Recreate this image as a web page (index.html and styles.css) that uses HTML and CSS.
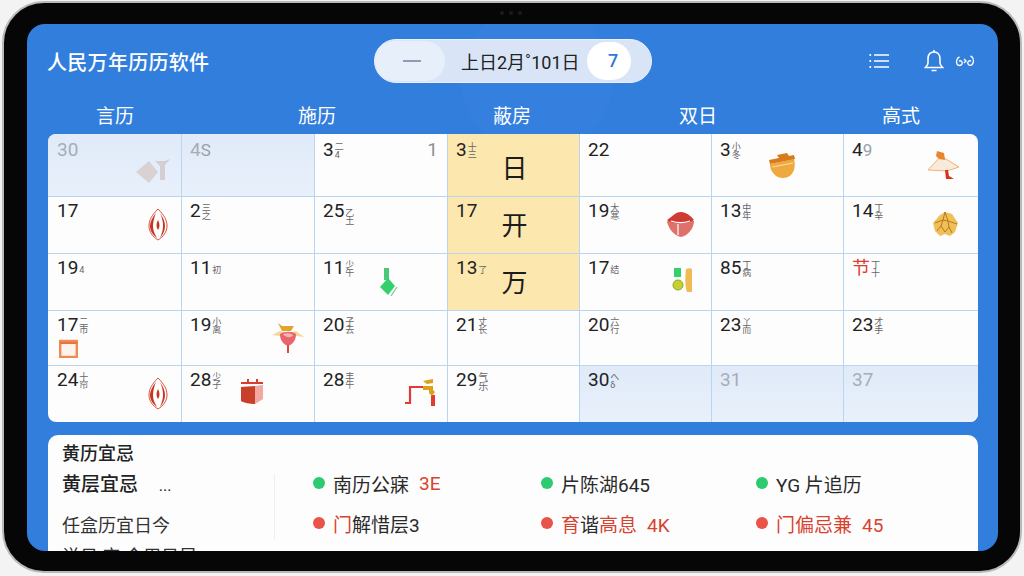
FILE: index.html

```html
<!DOCTYPE html>
<html lang="zh-CN">

<head>
    <meta charset="UTF-8">
    <meta name="viewport" content="width=device-width, initial-scale=1.0">
    <title>人民万年历历软件</title>
    <link rel="stylesheet" href="styles.css">
</head>

<body>
    <div class="device">
        <div class="camera"><i></i><i></i><i></i></div>
        <div class="screen">
            <header class="top">
                <h1 class="title">人民万年历历软件</h1>
                <div class="pill">
                    <div class="pill-minus"><span></span></div>
                    <div class="pill-date">上日2月˚101日</div>
                    <div class="pill-day">7</div>
                </div>
                <div class="tools">
                    <svg class="tool-list" viewBox="0 0 20 16" width="20" height="16" fill="none" stroke="#fff" stroke-width="1.5">
                        <path d="M5 2h15M5 8h15M5 14h15" />
                        <path d="M.5 2h1.6M.5 8h1.6M.5 14h1.6" stroke-width="2" />
                    </svg>
                    <svg class="tool-bell" viewBox="0 0 20 24" width="20" height="24" fill="none" stroke="#fff" stroke-width="1.6">
                        <path d="M10 3c-4 0-6 3-6 7v4c0 2-1 3-2.500 4.500h17C17 17 16 16 16 14v-4c0-4-2-7-6-7z" />
                        <path d="M10 1v2M7.500 21.500h5" />
                    </svg>
                    <svg class="tool-more" viewBox="0 0 20 14" width="20" height="14" fill="none" stroke="#fff" stroke-width="1.4">
                        <path d="M4.500 3C2 4 1 7 2 10c1 2 4 2 5 0 1-2-1-4-3-3" />
                        <path d="M15.500 2c2.500 1 3.500 4 2.500 7-1 3-4 3-5 1-1-2 1-4 3-3" />
                        <path d="M9 5l2 2-2 2" />
                    </svg>
                </div>
            </header>

            <div class="tabs">
                <span>言历</span>
                <span>施历</span>
                <span>蔽房</span>
                <span>双日</span>
                <span>高式</span>
            </div>

            <div class="month">
                <div class="cell off"><b>30</b>
                    <svg class="icon icon-faded" viewBox="0 0 36 25" width="36" height="25">
                        <path d="M14 3l9 11-9 11L1 14z" fill="#d8d2d3" />
                        <path d="M20 3h10l5-2-5 6v15h-5V8z" fill="#d2ced2" />
                    </svg>
                </div>
                <div class="cell off"><b>4</b><em class="wide">S</em></div>
                <div class="cell"><b>3</b><span class="lunar">二<br>4</span><span class="corner">1</span></div>
                <div class="cell hot"><b>3</b><span class="lunar">十<br>三</span><span class="big">日</span></div>
                <div class="cell"><b>22</b></div>
                <div class="cell"><b>3</b><span class="lunar">小<br>冬</span>
                    <svg class="icon icon-pot" viewBox="0 0 28 27" width="28" height="27">
                        <path d="M2 12l24-5c2 8 0 15-6 18-5 2-11 1-14-3-3-3-4-6-4-10z" fill="#eeaa3f" />
                        <path d="M1 8l25-5 1 4-25 5zM9 3l10-2 2 3-10 2z" fill="#d97a1c" />
                        <path d="M4 15l21-4" stroke="#fbe0a8" stroke-width="1" />
                    </svg>
                </div>
                <div class="cell"><b>4</b><em class="wide">9</em>
                    <svg class="icon icon-kite" viewBox="0 0 33 30" width="33" height="30">
                        <path d="M1 20L14 6l18 11-12 4z" fill="#f9ead9" stroke="#efb27a" stroke-width="1" />
                        <path d="M10 1l7 2 1 7-6-1-3-3z" fill="#e8872e" />
                        <path d="M18 20l3 0 1 6 5 3h-8z" fill="#d9321f" />
                    </svg>
                </div>

                <div class="cell"><b>17</b>
                    <svg class="icon icon-flame" viewBox="0 0 20 33" width="20" height="33">
                        <path d="M10 1C4 7 1 12 1 18c0 6 4 11 9 14 5-3 9-8 9-14 0-6-3-11-9-17z" fill="#fff" stroke="#d9503a" stroke-width="1" />
                        <path d="M8 5C4 10 2 14 2 18c0 5 3 9 7 12-3-5-4-8-4-12 0-4 1-8 3-13zM12 5c3 4 5 9 5 13 0 5-2 8-5 12 2-5 3-8 3-12s-1-9-3-13z" fill="#c7341f" />
                        <path d="M10 12c-2 4-2 7 0 10 2-3 2-6 0-10z" fill="#c7341f" />
                    </svg>
                </div>
                <div class="cell"><b>2</b><span class="lunar">三<br>之</span></div>
                <div class="cell"><b>25</b><span class="lunar low">乙<br>土</span></div>
                <div class="cell hot"><b>17</b><span class="big">开</span></div>
                <div class="cell"><b>19</b><span class="lunar">大<br>寒</span>
                    <svg class="icon icon-bowl" viewBox="0 0 29 26" width="29" height="26">
                        <path d="M1 10l27 0c0 7-6 15-13 16C8 25 2 17 1 10z" fill="#e0706a" />
                        <path d="M1 9c5-3 8-8 14-8 5 0 10 4 13 8-4 3-8 2-13 3C10 12 5 12 1 9z" fill="#cf3a34" />
                        <path d="M5 10c6 2 13 2 19 0M12 13v11" stroke="#fff" stroke-width="1.2" fill="none" />
                    </svg>
                </div>
                <div class="cell"><b>13</b><span class="lunar">中<br>年</span></div>
                <div class="cell"><b>14</b><span class="lunar">丁<br>辛</span>
                    <svg class="icon icon-flower" viewBox="0 0 27 26" width="27" height="26">
                        <path d="M13 1l7 2 6 9-3 9-5 4-5-2-5 2-5-5-2-8 7-8z" fill="#efbf58" />
                        <path d="M13 1l-2 8-8 3M13 1l3 9 9 3M11 9l5 1 1 6-4 5-4-6zM9 15l-4 5M17 16l3 6" stroke="#b9791f" stroke-width="1" fill="none" />
                    </svg>
                </div>

                <div class="cell"><b>19</b><span class="lunar low">4</span></div>
                <div class="cell"><b>11</b><span class="lunar low">初</span></div>
                <div class="cell"><b>11</b><span class="lunar">少<br>午</span>
                    <svg class="icon icon-bottle" viewBox="0 0 19 28" width="19" height="28">
                        <path d="M5 0h5v12H5z" fill="#48c878" />
                        <path d="M9 10l7 8-7 9-8-8z" fill="#35cf6b" />
                        <path d="M18 19l-6 9" stroke="#6ccf8c" stroke-width="1.200" />
                    </svg>
                </div>
                <div class="cell hot"><b>13</b><span class="lunar low">了</span><span class="big">万</span></div>
                <div class="cell"><b>17</b><span class="lunar low">结</span>
                    <svg class="icon icon-medal" viewBox="0 0 21 25" width="21" height="25">
                        <path d="M2 0h7v9H2z" fill="#35cf6b" />
                        <circle cx="6" cy="17" r="5" fill="#c9cf2f" stroke="#7fae2a" />
                        <path d="M14 1c3-1 6-1 6 1v22h-5c-2-5-2-15-1-23z" fill="#f1bb54" />
                    </svg>
                </div>
                <div class="cell"><b>85</b><span class="lunar">丁<br>病</span></div>
                <div class="cell"><b class="red">节</b><span class="lunar">丁<br>十</span></div>

                <div class="cell"><b>17</b><span class="lunar">二<br>市</span>
                    <svg class="icon icon-cal" viewBox="0 0 19 19" width="19" height="19" fill="none">
                        <rect x="1.200" y="2" width="16.600" height="16" fill="#fdf3ec" stroke="#f08a55" stroke-width="2.400" />
                        <path d="M1 4h17" stroke="#e8743a" stroke-width="2" />
                    </svg>
                </div>
                <div class="cell"><b>19</b><span class="lunar">小<br>离</span>
                    <svg class="icon icon-bloom" viewBox="0 0 32 31" width="32" height="31">
                        <path d="M0 13l8-4 8 2 8-2 8 6-7-1H8z" fill="#f3d69a" />
                        <path d="M6 1l4 3 12 0-3 5H10z" fill="#e0a52c" />
                        <path d="M8 12c5-3 12-3 16 0 0 6-3 10-8 12-5-2-8-6-8-12z" fill="#e7656b" />
                        <path d="M11 12c3-1 7-1 10 1-1 3-8 3-10-1z" fill="#f3b3b3" />
                        <path d="M15 23h2v8h-2z" fill="#d84a45" />
                    </svg>
                </div>
                <div class="cell"><b>20</b><span class="lunar">子<br>去</span></div>
                <div class="cell"><b>21</b><span class="lunar">丈<br>长</span></div>
                <div class="cell"><b>20</b><span class="lunar">六<br>行</span></div>
                <div class="cell"><b>23</b><span class="lunar">丫<br>而</span></div>
                <div class="cell"><b>23</b><span class="lunar">才<br>手</span></div>

                <div class="cell"><b>24</b><span class="lunar">十<br>帘</span>
                    <svg class="icon icon-flame" viewBox="0 0 20 33" width="20" height="33">
                        <path d="M10 1C4 7 1 12 1 18c0 6 4 11 9 14 5-3 9-8 9-14 0-6-3-11-9-17z" fill="#fff" stroke="#d9503a" stroke-width="1" />
                        <path d="M8 5C4 10 2 14 2 18c0 5 3 9 7 12-3-5-4-8-4-12 0-4 1-8 3-13zM12 5c3 4 5 9 5 13 0 5-2 8-5 12 2-5 3-8 3-12s-1-9-3-13z" fill="#c7341f" />
                        <path d="M10 12c-2 4-2 7 0 10 2-3 2-6 0-10z" fill="#c7341f" />
                    </svg>
                </div>
                <div class="cell"><b>28</b><span class="lunar">少<br>子</span>
                    <svg class="icon icon-box" viewBox="0 0 24 25" width="24" height="25">
                        <path d="M1 3h22v2H1zM7 0h2v4H7zM16 0h2v4h-2z" fill="#d93c30" />
                        <path d="M1 8l14-1v18c-5 0-11-1-14-3z" fill="#c9402a" />
                        <path d="M15 7l8-1v14l-8 5z" fill="#f0a8a0" />
                    </svg>
                </div>
                <div class="cell"><b>28</b><span class="lunar">丰<br>午</span>
                    <svg class="icon icon-tap" viewBox="0 0 30 28" width="30" height="28">
                        <path d="M1 26V25h4V9h14" fill="none" stroke="#e23b33" stroke-width="2.200" />
                        <path d="M26 17h4v11h-4z" fill="#e23b33" />
                        <path d="M18 3l10-2v4l-6 1zM18 8h10v4l2 2-3 4-3-3v-3h-6z" fill="#d9a21e" />
                    </svg>
                </div>
                <div class="cell"><b>29</b><span class="lunar wide-note">气<br>乐</span></div>
                <div class="cell off"><b>30</b><span class="lunar">へ<br>δ</span></div>
                <div class="cell off"><b class="dim">31</b></div>
                <div class="cell off"><b class="dim">37</b></div>
            </div>

            <section class="info">
                <h2 class="info-title">黄历宜忌</h2>
                <div class="info-body">
                    <div class="info-left">
                        <div class="info-head">黄层宜忌 <span>...</span></div>
                        <div class="info-sub">任盒历宜日今</div>
                        <div class="info-sub">说日 宜 今用日昂</div>
                    </div>
                    <ul class="info-list">
                        <li><i class="dot green"></i>南历公寐<span class="red-text num">3E</span></li>
                        <li><i class="dot green"></i>片陈湖645</li>
                        <li><i class="dot green"></i>YG 片追历</li>
                        <li><i class="dot red"></i><span class="red-text">门</span>解惜层3</li>
                        <li><i class="dot red"></i><span class="red-text">育</span>谐<span class="red-text">高息<span class="num">4K</span></span></li>
                        <li><i class="dot red"></i><span class="red-text">门偏忌兼<span class="num">45</span></span></li>
                    </ul>
                </div>
            </section>
        </div>
    </div>
</body>

</html>
```

FILE: styles.css

```css
* {
    box-sizing: border-box;
}

body,
h1,
h2,
ul,
li {
    margin: 0;
    padding: 0;
    list-style: none;
}

body {
    height: 576px;
    overflow: hidden;
    padding: 1px 2px 3px 2px;
    background: #f3f3f3;
    font-family: Roboto, "Noto Sans CJK SC", sans-serif;
    color: #222;
}

.device {
    position: relative;
    height: 572px;
    padding: 21px 22px 20px 23px;
    background: #060606;
    border-radius: 42px;
    border: 2px solid #b9b9b9;
}

.camera {
    position: absolute;
    top: 8px;
    left: 496px;
    display: flex;
    gap: 5px;
}

.camera i {
    width: 4px;
    height: 4px;
    border-radius: 50%;
    background: #1c1c20;
}

.screen {
    height: 100%;
    overflow: hidden;
    border-radius: 18px;
    background: radial-gradient(circle at 510px 55px, #3580df 0, #3580df 75px, transparent 76px), #327edd;
}

/* top bar */
.top {
    display: grid;
    grid-template-columns: 327px 278px 1fr;
    align-items: center;
    padding: 15px 21px 0 20px;
}

.title {
    font-size: 20px;
    font-weight: 500;
    letter-spacing: 0.3px;
    color: #fff;
}

.pill {
    height: 44px;
    display: flex;
    align-items: center;
    border-radius: 22px;
    background: #d9e5f6;
    border: 1px solid #e9f0fa;
}

.pill-minus {
    width: 70px;
    height: 40px;
    padding-left: 4px;
    display: flex;
    align-items: center;
    justify-content: center;
    background: #e7effb;
    border-radius: 20px;
}

.pill-minus span {
    width: 18px;
    height: 2px;
    background: #8f9db0;
}

.pill-date {
    width: 142px;
    padding-left: 16px;
    font-size: 18px;
    white-space: nowrap;
    color: #222;
}

.pill-day {
    width: 44px;
    height: 38px;
    padding-left: 8px;
    border-radius: 19px;
    background: #fff;
    color: #2f78d6;
    font-size: 18px;
    font-weight: 500;
    line-height: 38px;
    text-align: center;
}

.tools {
    display: flex;
    justify-content: flex-end;
    align-items: center;
    padding-right: 2px;
}

.tool-bell {
    margin-left: 35px;
}

.tool-more {
    margin-left: 11px;
}

/* weekday names */
.tabs {
    display: grid;
    grid-template-columns: 202px 195px 186px 203px auto;
    padding: 21px 0 0 69px;
    height: 51px;
    color: #fff;
    font-size: 19px;
    line-height: 26px;
}

/* month grid */
.month {
    display: grid;
    grid-template-columns: 134px 133px 133px 132px 132px 132px 134px;
    grid-template-rows: 63px 57px 57px 55px 56px;
    margin: 0 20px 0 21px;
    background: #fdfdfe;
    border-radius: 8px;
    overflow: hidden;
}

.cell {
    position: relative;
    display: flex;
    align-items: flex-start;
    padding: 4px 0 0 8px;
    border-right: 1px solid #b9d5ef;
    border-bottom: 1px solid #b9d5ef;
}

.cell:nth-child(7n+1) {
    padding-left: 9px;
}

.cell:nth-child(7n) {
    border-right: 0;
}

.cell:nth-child(n+29) {
    border-bottom: 0;
}

.cell:nth-child(-n+7) {
    padding-top: 6px;
}

.cell b {
    font-size: 19px;
    font-weight: 400;
    line-height: 20px;
    color: #222;
}

.cell b.red {
    color: #e03a2c;
    font-size: 18px;
}

.cell b.dim,
.off b {
    color: #a6adb8;
}

.off {
    background: linear-gradient(#e0eaf8, #e8f0fb);
}

.off:nth-child(n+29) b:not(.dim) {
    color: #222;
}

.hot {
    background: #fce7af;
}

.cell em {
    font-style: normal;
    font-size: 17px;
    line-height: 20px;
    color: #9aa0a8;
}

.lunar {
    margin: 3px 0 0 1px;
    font-size: 9px;
    line-height: 8px;
    color: #666;
}

.lunar.low {
    margin-top: 8px;
}

.wide-note {
    font-size: 10px;
    line-height: 9px;
}

.corner {
    margin-left: auto;
    padding-right: 9px;
    font-size: 19px;
    line-height: 20px;
    color: #8a8f96;
}

.big {
    position: absolute;
    inset: 2px 0 0 2px;
    display: flex;
    align-items: center;
    justify-content: center;
    font-size: 26px;
    color: #1c1c1c;
}

.hot:nth-child(n+8) .big {
    inset: 0 0 4px 2px;
}

/* small pictures sit over the cell like a badge */
.icon {
    position: absolute;
}

.icon-faded { right: 10px; top: 24px; }
.icon-pot { right: 47px; top: 18px; }
.icon-kite { right: 18px; top: 16px; }
.icon-flame { right: 13px; top: 11px; }
.icon-bowl { right: 16px; top: 14px; }
.icon-flower { right: 19px; top: 14px; }
.icon-bottle { right: 49px; top: 14px; }
.icon-medal { right: 18px; top: 14px; }
.icon-cal { left: 11px; top: 28px; }
.icon-bloom { right: 10px; top: 11px; }
.icon-box { right: 50px; top: 13px; }
.icon-tap { right: 12px; top: 12px; }

/* bottom panel */
.info {
    margin: 13px 20px 0 21px;
    height: 130px;
    padding: 7px 0 0 14px;
    background: #fdfdfe;
    border-radius: 10px 10px 0 0;
}

.info-title {
    font-size: 18px;
    font-weight: 500;
    line-height: 24px;
}

.info-body {
    display: flex;
    margin-top: 8px;
}

.info-left {
    width: 213px;
    height: 66px;
    border-right: 1px solid #eceef1;
}

.info-head {
    font-size: 19px;
    font-weight: 500;
    line-height: 24px;
    margin-top: -1px;
}

.info-head span {
    margin-left: 16px;
    font-weight: 400;
    font-size: 16px;
}

.info-sub {
    margin-top: 16px;
    font-size: 18px;
    line-height: 24px;
    color: #333;
    white-space: nowrap;
}

.info-sub + .info-sub {
    margin-top: 7px;
}

.info-list {
    display: grid;
    grid-template-columns: 228px 215px 1fr;
    grid-auto-rows: 40px;
    padding-left: 38px;
    margin-top: -3px;
}

.info-list li {
    display: flex;
    align-items: center;
    height: 24px;
    font-size: 19px;
    white-space: nowrap;
    color: #2a2a2a;
}

.dot {
    width: 12px;
    height: 12px;
    margin-right: 8px;
    border-radius: 50%;
}

.dot.green {
    background: #2ccb6f;
}

.dot.red {
    background: #ea5349;
}

.red-text {
    color: #d8432f;
}

.num {
    margin-left: 10px;
}
```
